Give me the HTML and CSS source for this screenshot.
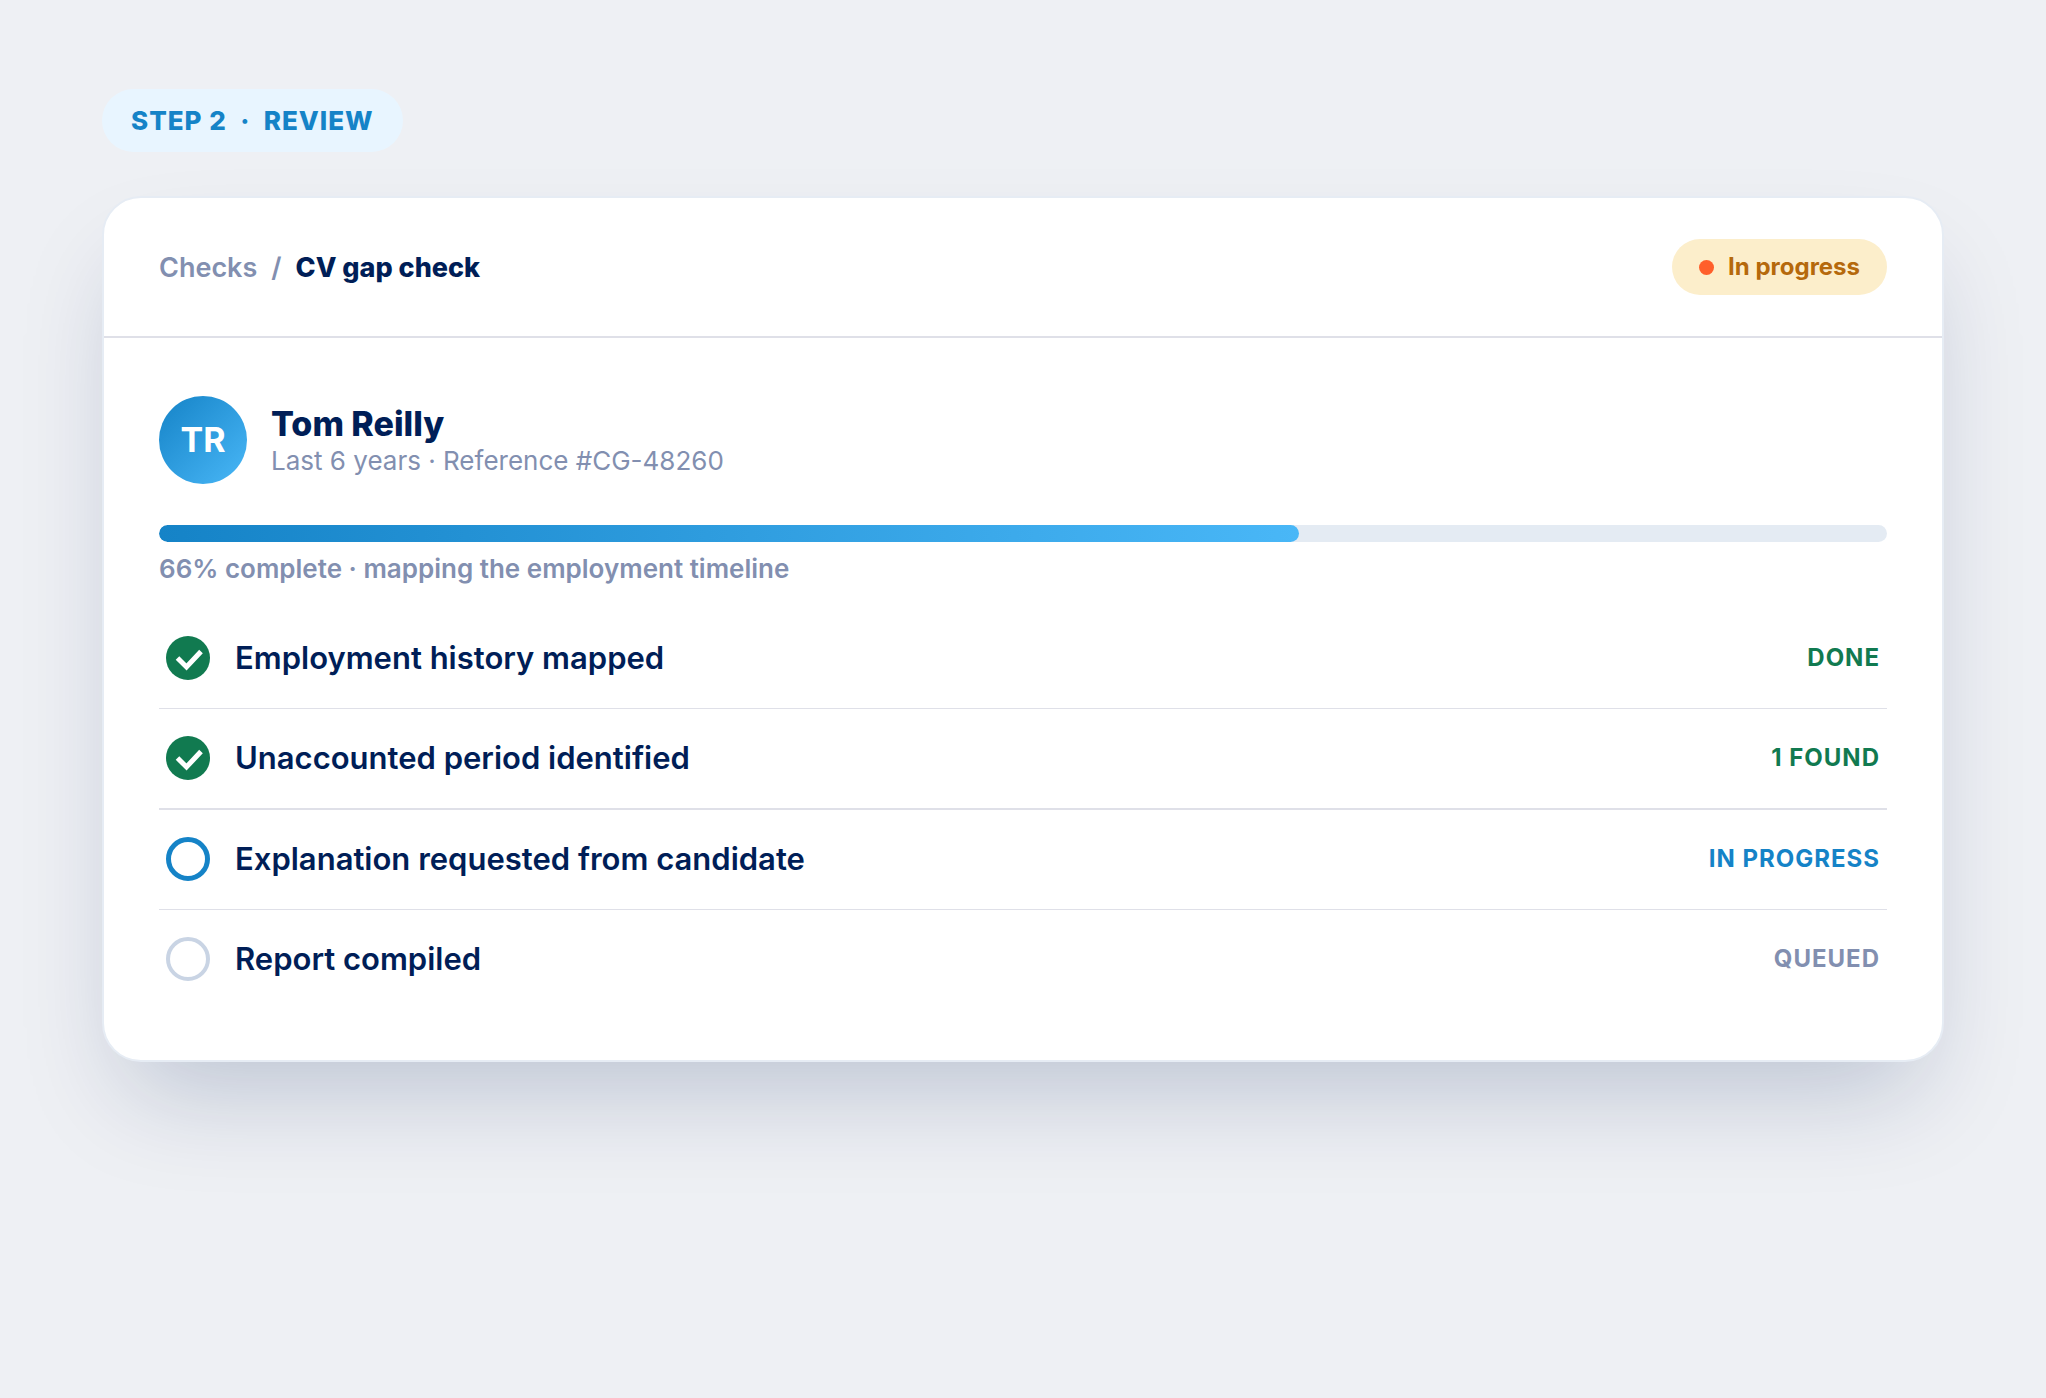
FILE: index.html
```html
<!DOCTYPE html>
<html lang="en">
<head>
<meta charset="utf-8">
<meta name="viewport" content="width=device-width, initial-scale=1">
<title>CV gap check</title>
<link rel="stylesheet" href="styles.css">
</head>
<body>
<main class="page">
  <p class="step">STEP 2 &nbsp;·&nbsp; REVIEW</p>
  <section class="card">
    <header class="card-head">
      <nav class="crumbs" aria-label="Breadcrumb">
        <a class="crumb-link" href="#checks">Checks</a>
        <span>/</span>
        <strong class="crumb-current">CV gap check</strong>
      </nav>
      <span class="pill">In progress</span>
    </header>
    <div class="card-body">
      <div class="person">
        <span class="avatar">TR</span>
        <div class="person-text">
          <h1 class="name">Tom Reilly</h1>
          <p class="meta">Last 6 years · Reference #CG-48260</p>
        </div>
      </div>
      <progress class="bar" id="check-progress" max="100" value="66"></progress>
      <label class="caption" for="check-progress">66% complete · mapping the employment timeline</label>
      <ul class="tasks">
        <li class="task task-done">
          <svg class="mark" viewBox="0 0 44 44" aria-hidden="true"><circle cx="22" cy="22" r="22" fill="currentColor"/><path d="M11.500 22L20.500 31L35 15.500" fill="none" stroke="#fff" stroke-width="5"/></svg>
          <span class="task-name">Employment history mapped</span>
          <span class="status">DONE</span>
        </li>
        <li class="task task-done">
          <svg class="mark" viewBox="0 0 44 44" aria-hidden="true"><circle cx="22" cy="22" r="22" fill="currentColor"/><path d="M11.500 22L20.500 31L35 15.500" fill="none" stroke="#fff" stroke-width="5"/></svg>
          <span class="task-name">Unaccounted period identified</span>
          <span class="status">1 FOUND</span>
        </li>
        <li class="task task-active">
          <span class="mark ring"></span>
          <span class="task-name">Explanation requested from candidate</span>
          <span class="status">IN PROGRESS</span>
        </li>
        <li class="task task-queued">
          <span class="mark ring"></span>
          <span class="task-name">Report compiled</span>
          <span class="status">QUEUED</span>
        </li>
      </ul>
    </div>
  </section>
</main>
</body>
</html>
```
FILE: styles.css
```css
:root {
  --navy: #001e57;
  --grey: #828fb0;
  --blue: #1583c7;
  --sky: #49b7f7;
  --green: #117a50;
  --line: #dfe0e8;
}

* { box-sizing: border-box; }

body {
  margin: 0;
  background: #eef0f4;
  color: var(--navy);
  font-family: Inter, "Liberation Sans", sans-serif;
}

h1, p, ul { margin: 0; padding: 0; }

.page {
  min-height: 100vh;
  padding: 89px 102px;
}

.step {
  width: fit-content;
  padding: 1px 29px 0;
  border-radius: 32px;
  background: #e8f5ff;
  color: var(--blue);
  font-size: 26px;
  font-weight: 800;
  line-height: 62px;
  letter-spacing: 1px;
}

.card {
  margin-top: 44px;
  border: 2px solid #e6ecf4;
  border-radius: 39px;
  background: #fff;
  box-shadow: 0 52px 104px -26px rgba(0, 30, 87, 0.22);
}

.card-head {
  display: flex;
  align-items: center;
  justify-content: space-between;
  padding: 41px 55px;
  border-bottom: 2px solid var(--line);
}

.crumbs {
  display: flex;
  gap: 14px;
  padding-top: 2px;
  color: var(--grey);
  font-size: 27px;
  font-weight: 600;
  line-height: 34px;
}

.crumb-link { color: inherit; text-decoration: none; }
.crumb-current { color: var(--navy); font-weight: 800; }

.pill {
  display: flex;
  align-items: center;
  gap: 14px;
  padding: 0 27px;
  border-radius: 28px;
  background: #fceecb;
  color: #b5690c;
  font-size: 24px;
  font-weight: 700;
  line-height: 56px;
}

.pill::before {
  width: 15px;
  height: 15px;
  border-radius: 50%;
  background: #ff5f2b;
  content: "";
}

.card-body { padding: 58px 55px 51px; }

.person {
  display: flex;
  align-items: center;
  gap: 24px;
}

.person-text { padding-top: 2px; }

.avatar {
  width: 88px;
  border-radius: 50%;
  background: linear-gradient(135deg, var(--blue), var(--sky));
  color: #fff;
  font-size: 34px;
  font-weight: 700;
  line-height: 88px;
  text-align: center;
}

.name {
  font-size: 34px;
  font-weight: 800;
  line-height: 40px;
}

.meta {
  color: var(--grey);
  font-size: 26px;
  line-height: 34px;
}

.bar {
  display: block;
  width: 100%;
  height: 17px;
  margin-top: 41px;
  overflow: hidden;
  border: 0;
  border-radius: 9px;
  background: #e4ebf3;
  appearance: none;
}

.bar::-webkit-progress-bar { background: #e4ebf3; }

.bar::-webkit-progress-value {
  border-radius: 9px;
  background: linear-gradient(90deg, var(--blue), var(--sky));
}

.caption {
  display: block;
  margin-top: 10px;
  color: var(--grey);
  font-size: 26px;
  font-weight: 600;
  line-height: 34px;
}

.tasks {
  margin-top: 23px;
  list-style: none;
}

.task {
  display: flex;
  align-items: center;
  gap: 25px;
  padding: 27px 7px 28px;
}

.task + .task { border-top: 1px solid var(--line); }
.task-active.task { border-top-width: 2px; }

.mark {
  flex: none;
  width: 44px;
  height: 44px;
}

.ring {
  border: 4px solid #c9d4e4;
  border-radius: 50%;
}

.task-active .ring { border: 5px solid var(--blue); }

.task-name {
  flex: 1;
  font-size: 31px;
  font-weight: 600;
  line-height: 38px;
}

.status {
  color: var(--grey);
  font-size: 24px;
  font-weight: 700;
  line-height: 30px;
  letter-spacing: 1px;
}

.task-done .status, .task-done .mark { color: var(--green); }
.task-active .status { color: var(--blue); }
```
